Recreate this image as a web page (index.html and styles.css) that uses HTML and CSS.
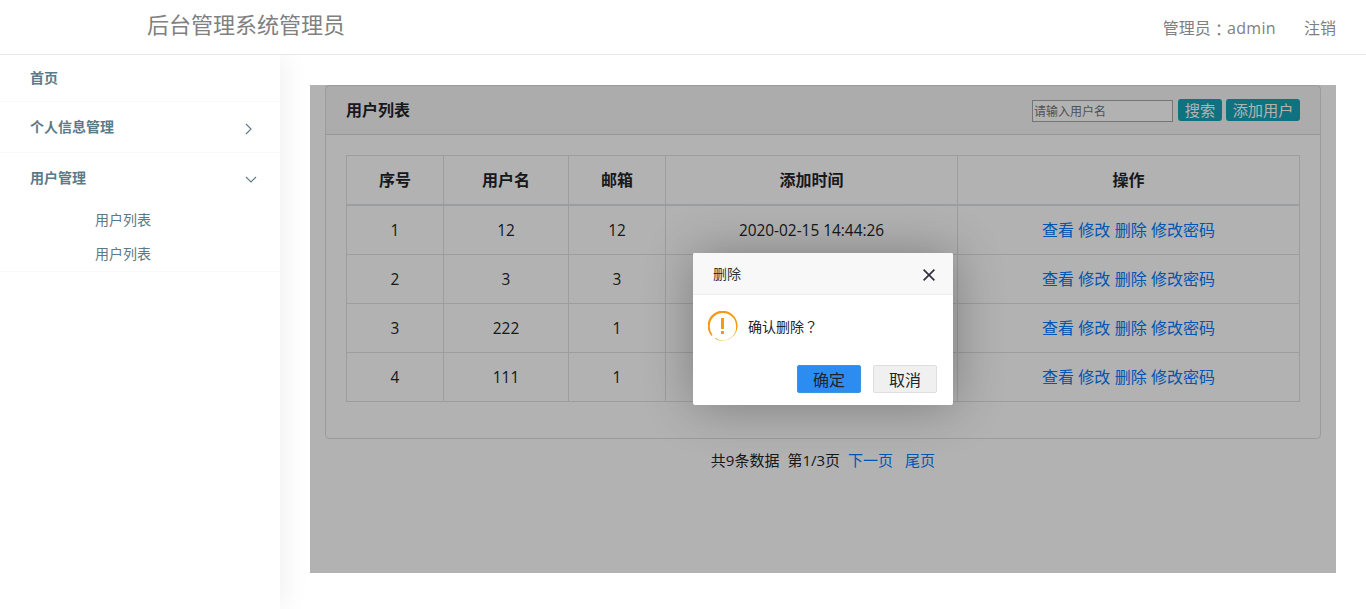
FILE: index.html
```html
<!DOCTYPE html>
<html lang="zh-CN">
<head>
<meta charset="utf-8">
<title>后台管理系统管理员</title>
<link rel="stylesheet" href="styles.css">
</head>
<body>
<header class="topbar">
  <h1 class="brand">后台管理系统管理员</h1>
  <nav class="account"><span>管理员<span class="punct colon" lang="zh-TW">：</span><span class="admin">admin</span></span><a>注销</a></nav>
</header>
<div class="shell">
  <aside class="sidebar">
    <div class="menu home">首页</div>
    <div class="menu">个人信息管理
      <svg class="arrow right" width="8" height="12" viewBox="0 0 8 12"><path d="M1 1l5 5-5 5"/></svg>
    </div>
    <div class="menu open">用户管理
      <svg class="arrow" width="12" height="8" viewBox="0 0 12 8"><path d="M1 1l5 5 5-5"/></svg>
    </div>
    <div class="submenu"><a>用户列表</a><a>用户列表</a></div>
  </aside>
  <main class="main">
    <div class="frame">
      <section class="card">
        <div class="card-header">
          <span class="card-title">用户列表</span>
          <form class="search">
            <input class="search-input" type="text" placeholder="请输入用户名">
            <button class="btn" type="button">搜索</button>
            <button class="btn btn-add" type="button">添加用户</button>
          </form>
        </div>
        <div class="table">
          <div class="row head"><span>序号</span><span>用户名</span><span>邮箱</span><span>添加时间</span><span>操作</span></div>
          <div class="row"><span>1</span><span>12</span><span>12</span><span>2020-02-15 14:44:26</span><span class="ops"><a>查看</a><a>修改</a><a>删除</a><a>修改密码</a></span></div>
          <div class="row"><span>2</span><span>3</span><span>3</span><span></span><span class="ops"><a>查看</a><a>修改</a><a>删除</a><a>修改密码</a></span></div>
          <div class="row"><span>3</span><span>222</span><span>1</span><span></span><span class="ops"><a>查看</a><a>修改</a><a>删除</a><a>修改密码</a></span></div>
          <div class="row"><span>4</span><span>111</span><span>1</span><span></span><span class="ops"><a>查看</a><a>修改</a><a>删除</a><a>修改密码</a></span></div>
        </div>
      </section>
      <div class="pager"><span>共9条数据</span><span class="page-no">第1/3页</span><a class="next">下一页</a><a>尾页</a></div>
      <div class="shade"></div>
      <div class="dialog">
        <div class="dialog-title">删除
          <svg class="close" width="14" height="14" viewBox="0 0 14 14"><path d="M1.6 1.6l10.8 10.8M12.4 1.6L1.6 12.4"/></svg>
        </div>
        <div class="dialog-body">
          <svg class="warn" width="30" height="30" viewBox="0 0 30 30">
            <path class="ring" d="M3.600 25A15 15 0 1 1 7 27.700L7.500 26.900A13 13 0 0 0 28 15A13 13 0 0 0 15 2A13.100 13.100 0 0 0 1.800 15A14 14 0 0 0 4.600 24.100Z"/>
            <path class="mark" d="M13 7h3v11h-3zM13 20h3v3h-3z"/>
          </svg>
          <span>确认删除<span class="punct" lang="zh-TW">？</span></span>
        </div>
        <div class="dialog-actions"><button class="dbtn primary" type="button">确定</button><button class="dbtn" type="button">取消</button></div>
      </div>
    </div>
  </main>
</div>
</body>
</html>
```
FILE: styles.css
```css
* { box-sizing: border-box; }
body { margin: 0; height: 609px; overflow: hidden; background: #fff; font: 16px/24px "Open Sans", "Noto Sans CJK SC", sans-serif; color: #212529; display: flex; flex-direction: column; }
button, input { font-family: inherit; }
.punct { font-family: "Noto Sans CJK TC", sans-serif; line-height: 1; }
.colon { vertical-align: -2px; }
.topbar { height: 55px; flex: none; border-bottom: 1px solid #e7e7e7; display: flex; justify-content: space-between; padding: 0 30px 0 147px; color: #808080; }
.brand { margin: 8px 0 0; font-size: 22px; line-height: 33px; font-weight: 400; }
.account { display: flex; gap: 28px; padding-top: 16px; }
.admin { letter-spacing: .35px; }
.shell { flex: 1; display: flex; }
.sidebar { width: 280px; background: #fff; color: #5a7a89; font-size: 14px; box-shadow: 0 0 30px rgba(0,0,0,.08); clip-path: inset(0 -30px 0 0); }
.menu { height: 51px; padding: 0 23px 1px 30px; border-bottom: 1px solid #f8f8f8; display: flex; align-items: center; justify-content: space-between; font-weight: 700; }
.menu.home { height: 47px; }
.menu.open { border-bottom: 0; height: 50px; padding-bottom: 0; }
.arrow { fill: none; stroke: #5a7a89; stroke-width: 1.1; margin-top: 4px; }
.arrow.right { margin-right: 4px; }
.submenu { height: 69px; border-bottom: 1px solid #f8f8f8; padding-left: 95px; display: flex; flex-direction: column; line-height: 34px; }
.main { flex: 1; padding: 30px 30px 0; }
.frame { position: relative; height: 488px; padding: 0 15px; }
.card { height: 354px; border: 1px solid rgba(0,0,0,.125); border-radius: 4px; }
.card-header { height: 49px; padding: 0 20px; border-bottom: 1px solid rgba(0,0,0,.125); background: rgba(0,0,0,.03); display: flex; align-items: center; justify-content: space-between; }
.card-title { font-weight: 700; }
.search { display: flex; align-items: center; gap: 4px; }
.search-input { width: 141px; height: 22px; margin: 2px 1px 0 0; padding: 1px; border: 1px solid #a9a9a9; background: #fff; font-size: 12px; }
.search-input::placeholder { color: #757575; }
.btn { width: 44px; height: 22px; border: 0; padding: 0; border-radius: 3px; background: #17a2b8; color: #fff; font-size: 15.2px; line-height: 22px; }
.btn-add { width: 74px; }
.table { margin: 20px 20px 0; border: 1px solid #dee2e6; border-width: 1px 0 0 1px; }
.row { display: grid; grid-template-columns: 97px 125px 97px 292px 342px; height: 49px; }
.row > span { display: flex; align-items: center; justify-content: center; border-right: 1px solid #dee2e6; border-bottom: 1px solid #dee2e6; font-size: 15.400px; padding-top: 1px; }
.row.head { height: 50px; }
.row.head > span { border-bottom-width: 2px; font-size: 16px; font-weight: 700; padding: 0 0 1px; }
.row > .ops { gap: 4.400px; font-size: 16px; padding-top: 0; }
a { color: #007bff; }
.account a, .submenu a { color: inherit; }
.pager { display: flex; justify-content: center; padding-top: 9px; font-size: 15px; }
.page-no { margin-left: 8px; }
.next { margin: 0 12px 0 8px; }
.shade { position: absolute; inset: 0; background: rgba(0,0,0,.3); }
.dialog { position: absolute; left: 383px; top: 168px; width: 260px; height: 152px; background: #fff; border-radius: 2px; box-shadow: 1px 1px 50px rgba(0,0,0,.3); color: #333; font-size: 14px; }
.dialog-title { height: 42px; padding: 0 17px 0 20px; border-bottom: 1px solid #eee; background: #f8f8f8; display: flex; align-items: center; justify-content: space-between; border-radius: 2px 2px 0 0; }
.close { fill: none; stroke: #2e2d3c; stroke-width: 1.600; margin-top: 3px; }
.dialog-body { height: 70px; padding: 16px 15px; display: flex; gap: 10px; line-height: 32px; color: #212529; }
.ring, .mark { fill: #f59a14; }
.dialog-actions { display: flex; justify-content: flex-end; gap: 12px; padding-right: 16px; }
.dbtn { width: 64px; height: 28px; border: 1px solid #dedede; border-radius: 2px; background: #f0f0f0; color: #212529; font-size: 16px; line-height: 24px; padding: 2px 0 0; }
.primary { background: #2d8cf0; border-color: #3b97dc; }
```
